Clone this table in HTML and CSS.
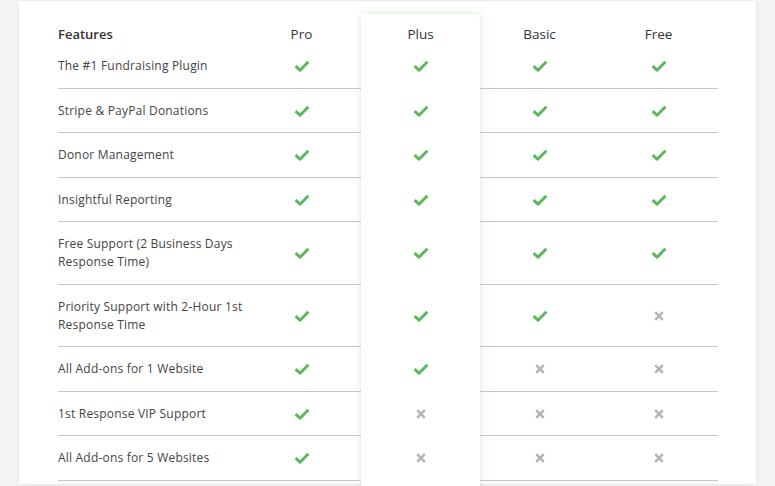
FILE: index.html
```html
<!DOCTYPE html>
<html lang="en">
<head>
<meta charset="utf-8">
<title>Pricing comparison</title>
<link rel="stylesheet" href="styles.css">
</head>
<body>
<svg width="0" height="0" class="defs" aria-hidden="true">
  <defs>
    <symbol id="chk" viewBox="0 0 16 12"><path d="M1.6 6.2 L6 10.2 L14.4 1.8" fill="none" stroke="#5cb85c" stroke-width="3" stroke-linejoin="round"/></symbol>
    <symbol id="no" viewBox="0 0 10 10"><path d="M1.2 1.2 L8.8 8.8 M8.8 1.2 L1.2 8.8" fill="none" stroke="#b3b3b3" stroke-width="2.4"/></symbol>
  </defs>
</svg>
<main class="card">
  <div class="grid">
    <div class="plus-bg"></div>

    <div class="hd feat">Features</div>
    <div class="hd">Pro</div>
    <div class="hd">Plus</div>
    <div class="hd">Basic</div>
    <div class="hd">Free</div>

    <div class="c feat first">The #1 Fundraising Plugin</div>
    <div class="c first"><svg class="ck"><use href="#chk"/></svg></div>
    <div class="c plus first"><svg class="ck"><use href="#chk"/></svg></div>
    <div class="c first"><svg class="ck"><use href="#chk"/></svg></div>
    <div class="c first"><svg class="ck"><use href="#chk"/></svg></div>

    <div class="c feat">Stripe &amp; PayPal Donations</div>
    <div class="c"><svg class="ck"><use href="#chk"/></svg></div>
    <div class="c plus"><svg class="ck"><use href="#chk"/></svg></div>
    <div class="c"><svg class="ck"><use href="#chk"/></svg></div>
    <div class="c"><svg class="ck"><use href="#chk"/></svg></div>

    <div class="c feat">Donor Management</div>
    <div class="c"><svg class="ck"><use href="#chk"/></svg></div>
    <div class="c plus"><svg class="ck"><use href="#chk"/></svg></div>
    <div class="c"><svg class="ck"><use href="#chk"/></svg></div>
    <div class="c"><svg class="ck"><use href="#chk"/></svg></div>

    <div class="c feat">Insightful Reporting</div>
    <div class="c"><svg class="ck"><use href="#chk"/></svg></div>
    <div class="c plus"><svg class="ck"><use href="#chk"/></svg></div>
    <div class="c"><svg class="ck"><use href="#chk"/></svg></div>
    <div class="c"><svg class="ck"><use href="#chk"/></svg></div>

    <div class="c feat">Free Support (2 Business Days<br>Response Time)</div>
    <div class="c"><svg class="ck"><use href="#chk"/></svg></div>
    <div class="c plus"><svg class="ck"><use href="#chk"/></svg></div>
    <div class="c"><svg class="ck"><use href="#chk"/></svg></div>
    <div class="c"><svg class="ck"><use href="#chk"/></svg></div>

    <div class="c feat">Priority Support with 2-Hour 1st<br>Response Time</div>
    <div class="c"><svg class="ck"><use href="#chk"/></svg></div>
    <div class="c plus"><svg class="ck"><use href="#chk"/></svg></div>
    <div class="c"><svg class="ck"><use href="#chk"/></svg></div>
    <div class="c"><svg class="x"><use href="#no"/></svg></div>

    <div class="c feat">All Add-ons for 1 Website</div>
    <div class="c"><svg class="ck"><use href="#chk"/></svg></div>
    <div class="c plus"><svg class="ck"><use href="#chk"/></svg></div>
    <div class="c"><svg class="x"><use href="#no"/></svg></div>
    <div class="c"><svg class="x"><use href="#no"/></svg></div>

    <div class="c feat">1st Response VIP Support</div>
    <div class="c"><svg class="ck"><use href="#chk"/></svg></div>
    <div class="c plus"><svg class="x"><use href="#no"/></svg></div>
    <div class="c"><svg class="x"><use href="#no"/></svg></div>
    <div class="c"><svg class="x"><use href="#no"/></svg></div>

    <div class="c feat">All Add-ons for 5 Websites</div>
    <div class="c"><svg class="ck"><use href="#chk"/></svg></div>
    <div class="c plus"><svg class="x"><use href="#no"/></svg></div>
    <div class="c"><svg class="x"><use href="#no"/></svg></div>
    <div class="c"><svg class="x"><use href="#no"/></svg></div>
  </div>
</main>
</body>
</html>
```

FILE: styles.css
```css
html, body {
  margin: 0;
  padding: 0;
  height: 100%;
  overflow: hidden;
  background: #f5f5f5;
}
.defs {
  position: absolute;
  width: 0;
  height: 0;
}
.card {
  margin: 1px 0 0 19px;
  width: 737px;
  height: 483px;
  box-sizing: border-box;
  background: #fff;
  box-shadow: 0 0 6px rgba(0, 0, 0, 0.09);
  padding: 23px 0 0 39px;
  font-family: "Open Sans", "Liberation Sans", sans-serif;
  color: #444;
}
.grid {
  display: grid;
  grid-template-columns: 184px repeat(4, 119px);
  position: relative;
}
.plus-bg {
  position: absolute;
  grid-column: 3 / 4;
  top: -10px;
  bottom: -20px;
  left: 0;
  right: 0;
  background: #fff;
  border-radius: 3px 3px 0 0;
  box-shadow: 0 0 7px rgba(110, 180, 100, 0.28);
}
.hd {
  line-height: 20px;
  font-size: 13.5px;
  color: #333;
  text-align: center;
  position: relative;
}
.hd.feat {
  text-align: left;
  font-weight: 600;
  font-size: 13px;
}
.c {
  padding: 12.75px 0;
  line-height: 18px;
  font-size: 12px;
  letter-spacing: 0.2px;
  border-bottom: 1px solid #c6c6c6;
  display: flex;
  align-items: center;
  justify-content: center;
  position: relative;
}
.c.feat {
  display: block;
  white-space: nowrap;
}
.c.plus {
  border-bottom-color: transparent;
}
.c.first {
  padding-top: 13px;
}
.ck {
  width: 16px;
  height: 12px;
  display: block;
}
.x {
  width: 10px;
  height: 10px;
  display: block;
}
```
